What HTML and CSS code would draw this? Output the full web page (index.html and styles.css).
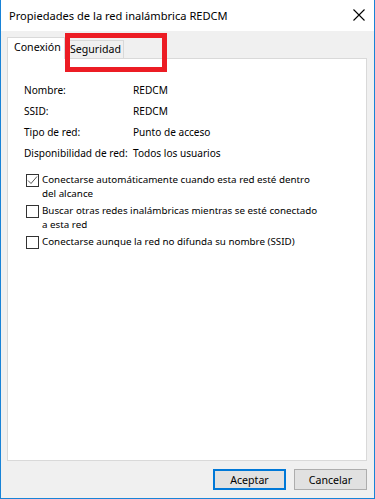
FILE: index.html
```html
<!DOCTYPE html>
<html lang="es">
<head>
<meta charset="utf-8">
<title>Propiedades de la red inalámbrica REDCM</title>
<link rel="stylesheet" href="styles.css">
</head>
<body>
<div class="window">
  <div class="titlebar">
    <span class="title">Propiedades de la red inalámbrica REDCM</span>
    <svg class="close" width="12" height="12" viewBox="0 0 12 12"><path d="M0.5 0.5 L11.5 11.5 M11.5 0.5 L0.5 11.5" stroke="#000" stroke-width="1.1" fill="none"/></svg>
  </div>
  <div class="body">
    <div class="tabs">
      <div class="tab active">Conexión</div>
      <div class="tab">Seguridad</div>
      <div class="highlight"></div>
    </div>
    <div class="panel">
      <div class="info">
        <div class="row"><span class="label">Nombre:</span><span class="value">REDCM</span></div>
        <div class="row"><span class="label">SSID:</span><span class="value">REDCM</span></div>
        <div class="row"><span class="label">Tipo de red:</span><span class="value">Punto de acceso</span></div>
        <div class="row"><span class="label">Disponibilidad de red:</span><span class="value">Todos los usuarios</span></div>
      </div>
      <div class="checks">
        <div class="check">
          <span class="box"><svg width="11" height="11" viewBox="0 0 11 11"><path d="M1 5.5 L4 8.5 L10 1.5" stroke="#555" stroke-width="1" fill="none"/></svg></span>
          <span class="ctext">Conectarse automáticamente cuando esta red esté dentro<br>del alcance</span>
        </div>
        <div class="check">
          <span class="box"></span>
          <span class="ctext">Buscar otras redes inalámbricas mientras se esté conectado<br>a esta red</span>
        </div>
        <div class="check">
          <span class="box"></span>
          <span class="ctext">Conectarse aunque la red no difunda su nombre (SSID)</span>
        </div>
      </div>
    </div>
    <div class="buttons">
      <button class="btn default">Aceptar</button>
      <button class="btn">Cancelar</button>
    </div>
  </div>
</div>
</body>
</html>
```

FILE: styles.css
```css
html, body {
  margin: 0;
  padding: 0;
  background: #ffffff;
}
body {
  font-family: "Noto Sans", "Open Sans", sans-serif;
  font-size: 10.1px;
  color: #000;
}
.window {
  width: 375px;
  height: 499px;
  box-sizing: border-box;
  border: 1px solid #1883d7;
  border-top: none;
  display: flex;
  flex-direction: column;
  background: #f0f0f0;
}
.titlebar {
  height: 31px;
  background: #fff;
  display: flex;
  align-items: center;
  justify-content: space-between;
  padding: 0 9px 1px 8px;
  box-sizing: border-box;
  flex-shrink: 0;
}
.title {
  font-size: 11.1px;
  white-space: nowrap;
}
.body {
  flex: 1;
  display: flex;
  flex-direction: column;
  padding: 6px 7px 0 6px;
}
.tabs {
  display: flex;
  align-items: flex-end;
  height: 21px;
  position: relative;
  z-index: 1;
}
.tab {
  height: 18px;
  box-sizing: border-box;
  border: 1px solid #d9d9d9;
  border-bottom: none;
  background: #f0f0f0;
  line-height: 17px;
  white-space: nowrap;
  font-size: 10.6px;
}
.tab.active {
  height: 22px;
  margin-bottom: -1px;
  background: #fff;
  width: 58px;
  padding: 0 0 0 6px;
  line-height: 18px;
}
.tab:not(.active) {
  width: 60px;
  margin-left: -1px;
  padding-left: 5px;
}
.highlight {
  position: absolute;
  left: 58px;
  top: -4px;
  width: 92px;
  height: 29px;
  border: 5px solid #ec1c24;
}
.panel {
  height: 403px;
  box-sizing: border-box;
  background: #fff;
  border: 1px solid #d9d9d9;
  width: 360px;
}
.info {
  padding: 21px 0 0 16px;
}
.row {
  display: flex;
  height: 21px;
  line-height: 21px;
  white-space: nowrap;
}
.label {
  width: 109px;
}
.checks {
  padding: 9px 0 0 18px;
  display: flex;
  flex-direction: column;
  gap: 3px;
}
.check {
  display: flex;
  align-items: flex-start;
}
.box {
  width: 13px;
  height: 13px;
  box-sizing: border-box;
  border: 1px solid #333;
  background: #fff;
  margin-top: 1px;
  margin-right: 3px;
  display: flex;
  align-items: center;
  justify-content: center;
  flex-shrink: 0;
}
.ctext {
  line-height: 14px;
  white-space: nowrap;
  font-size: 9.8px;
}
.buttons {
  display: flex;
  justify-content: flex-end;
  gap: 8px;
  padding: 8px 0 0 0;
}
.btn {
  width: 73px;
  height: 21px;
  box-sizing: border-box;
  border: 1px solid #adadad;
  background: #e1e1e1;
  font-family: inherit;
  font-size: 10.6px;
  padding: 0;
  color: #000;
  display: flex;
  align-items: center;
  justify-content: center;
}
.btn.default {
  border: 2px solid #0078d7;
}
```
